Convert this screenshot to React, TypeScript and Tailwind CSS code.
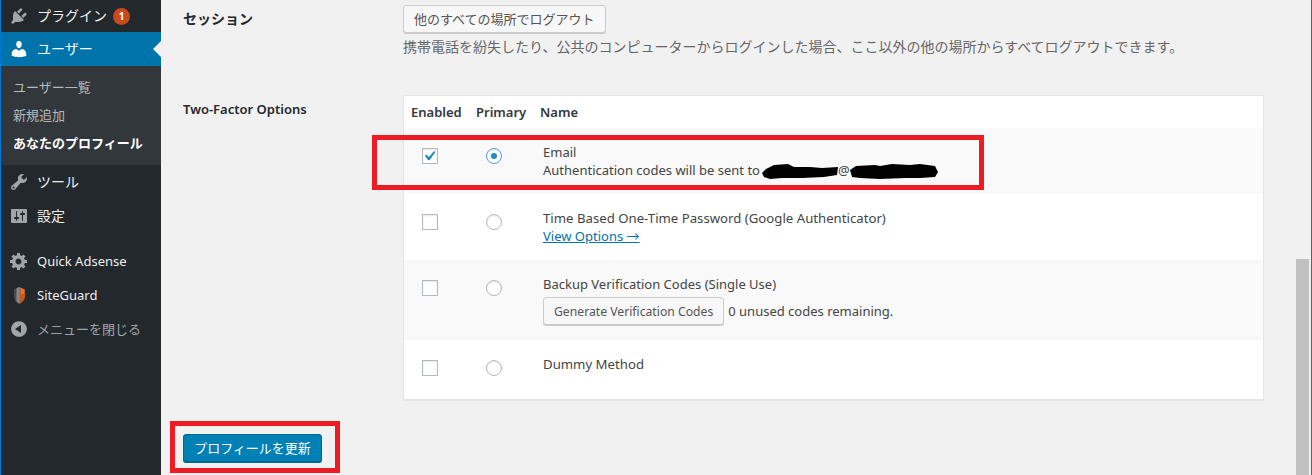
import React from 'react';

const font = { fontFamily: '"Noto Sans", "Noto Sans CJK JP", sans-serif' };

const icons: Record<string, string> = {
  plugin:
    'M13.11 4.36L9.87 7.6 8 5.73l3.24-3.24c.35-.34 1.05-.2 1.56.32.52.51.66 1.21.31 1.55zm-8 1.77l.91-1.12 9.01 9.01-1.19.84c-.71.71-2.63 1.16-3.82 1.16H6.14L4.9 17.26c-.59.59-1.54.59-2.12 0-.59-.58-.59-1.53 0-2.12l1.24-1.24v-3.88c0-1.13.4-3.19 1.09-3.89zm7.26 3.97l3.24-3.24c.34-.35 1.04-.21 1.55.31.52.51.66 1.21.31 1.55l-3.24 3.25z',
  user:
    'M10 9.25c-2.27 0-2.73-3.44-2.73-3.44C7 4.02 7.82 2 9.97 2c2.16 0 2.98 2.02 2.71 3.81 0 0-.41 3.44-2.68 3.44zm0 2.57L12.72 10c2.39 0 4.52 2.33 4.52 4.53v2.49s-3.65 1.13-7.24 1.13c-3.65 0-7.24-1.13-7.24-1.13v-2.49c0-2.25 1.94-4.48 4.47-4.48z',
  tools:
    'M16.68 9.77c-1.34 1.34-3.3 1.67-4.95.99l-5.41 6.52c-.99.99-2.59.99-3.58 0s-.99-2.59 0-3.57l6.52-5.42c-.68-1.65-.35-3.61.99-4.95 1.28-1.28 3.12-1.62 4.72-1.06l-2.89 2.89 2.82 2.82 2.86-2.87c.53 1.58.18 3.39-1.08 4.65zM3.81 16.21c.4.39 1.04.39 1.43 0 .4-.4.4-1.04 0-1.43-.39-.4-1.03-.4-1.43 0-.39.39-.39 1.03 0 1.43z',
  settings:
    'M18 16V4c0-.55-.45-1-1-1H3c-.55 0-1 .45-1 1v12c0 .55.45 1 1 1h14c.55 0 1-.45 1-1zM8 11h1c.55 0 1 .45 1 1s-.45 1-1 1H8v1.5c0 .28-.22.5-.5.5s-.5-.22-.5-.5V13H6c-.55 0-1-.45-1-1s.45-1 1-1h1V5.5c0-.28.22-.5.5-.5s.5.22.5.5V11zm5-2h-1c-.55 0-1-.45-1-1s.45-1 1-1h1V5.5c0-.28.22-.5.5-.5s.5.22.5.5V7h1c.55 0 1 .45 1 1s-.45 1-1 1h-1v5.5c0 .28-.22.5-.5.5s-.5-.22-.5-.5V9z',
  gear:
    'M18 12h-2.18c-.17.7-.44 1.35-.81 1.93l1.54 1.54-2.1 2.1-1.54-1.54c-.58.36-1.23.63-1.91.79V19H8v-2.18c-.68-.16-1.33-.43-1.91-.79l-1.54 1.54-2.12-2.12 1.54-1.54c-.36-.58-.63-1.23-.79-1.91H1V9.03h2.17c.16-.7.44-1.35.8-1.94L2.43 5.55l2.1-2.1 1.54 1.54c.58-.37 1.24-.64 1.93-.81V2h3v2.18c.68.16 1.33.43 1.91.79l1.54-1.54 2.12 2.12-1.54 1.54c.36.59.64 1.24.8 1.94H18V12zm-8.5 1.5c1.66 0 3-1.34 3-3s-1.34-3-3-3-3 1.34-3 3 1.34 3 3 3z',
  collapse:
    'M10 2.16c4.33 0 7.84 3.51 7.84 7.84s-3.51 7.84-7.84 7.84S2.16 14.33 2.16 10 5.67 2.16 10 2.16zM12 14V6l-6 4z',
};

const MenuIcon = ({ name, className }: { name: string; className: string }) => (
  <svg viewBox="0 0 20 20" className={`h-5 w-5 shrink-0 ${className}`} fill="currentColor" fillRule="evenodd">
    <path d={icons[name]} />
  </svg>
);

const ShieldIcon = () => (
  <svg viewBox="0 0 20 20" className="h-5 w-5 shrink-0">
    <path d="M10 2 L5 4.5 V11 C5 15 7 17.5 10 19z" fill="#4a4d50" />
    <path d="M10 2 L16 4.5 V11 C16 15 13 17.5 10 19z" fill="#c9591a" />
    <path d="M12 3 L15 4.5 V9 H12z" fill="#b9853f" />
    <path d="M7.5 3.2 L10.5 2 V18.5 L7.5 16.5z" fill="#85878a" />
  </svg>
);

const MenuItem = ({ children, icon }: { children: React.ReactNode; icon: React.ReactNode }) => (
  <div className="flex h-[34px] items-center gap-2 pl-2 text-[14px] text-[#eeeeee]">
    {icon}
    {children}
  </div>
);

const Checkbox = ({ checked }: { checked?: boolean }) => (
  <span className="flex h-4 w-4 items-center justify-center border border-[#b4b9be] bg-white shadow-[inset_0_1px_2px_rgba(0,0,0,0.1)]">
    {checked && (
      <svg viewBox="3.8 2.9 14 14" className="h-[14px] w-[14px] shrink-0 text-[#1e8cbe]" fill="currentColor">
        <path d="M14.83 4.89l1.34.94-5.81 8.38H9.02L5.78 9.67l1.34-1.25 2.57 2.4z" />
      </svg>
    )}
  </span>
);

const Radio = ({ checked }: { checked?: boolean }) => (
  <span
    className={`flex h-4 w-4 items-center justify-center rounded-full border bg-white shadow-[inset_0_1px_2px_rgba(0,0,0,0.1)] ${
      checked ? 'border-[#5b9dd9]' : 'border-[#b4b9be]'
    }`}
  >
    {checked && <span className="h-[6px] w-[6px] rounded-full bg-[#1e8cbe]" />}
  </span>
);

// redacted part of the address, drawn over in the screenshot
const Scribble = ({ width, d, className }: { width: number; d: string; className?: string }) => (
  <svg viewBox={`0 0 ${width} 15`} width={width} height={15} className={`inline-block align-[-4px] ${className ?? ''}`}>
    <path d={d} fill="#000" />
  </svg>
);

const MethodRow = ({
  children,
  checked,
  shaded,
  height,
}: {
  children: React.ReactNode;
  checked?: boolean;
  shaded?: boolean;
  height: string;
}) => (
  <div className={`grid grid-cols-[65px_64px_1fr] ${height} ${shaded ? 'bg-[#f9f9f9]' : 'bg-white'}`}>
    <div className="pl-[18px] pt-5">
      <Checkbox checked={checked} />
    </div>
    <div className="pl-[17px] pt-5">
      <Radio checked={checked} />
    </div>
    <div className="pl-[10px] pt-[15px] text-[#444444]">{children}</div>
  </div>
);

export default function App() {
  return (
    <div
      className="relative flex h-[475px] w-[1312px] overflow-hidden border-x border-[#0078d7] bg-[#f1f1f1] text-[13px] leading-[18px]"
      style={font}
    >
      {/* Admin menu */}
      <aside className="w-40 shrink-0 bg-[#23282d]">
        <div className="flex h-8 items-center gap-2 pl-2 text-[14px] text-[#eeeeee]">
          <MenuIcon name="plugin" className="text-[#a0a5aa]" />
          プラグイン
          <span className="ml-[-2px] flex h-[17px] w-[17px] items-center justify-center rounded-full bg-[#ca4a1f] text-[10px] font-bold text-white">
            1
          </span>
        </div>
        <div className="relative flex h-[34px] items-center gap-2 bg-[#0073aa] pl-2 text-[14px] text-white">
          <MenuIcon name="user" className="text-white" />
          ユーザー
          <span className="absolute right-0 top-[9px] border-y-8 border-r-8 border-y-transparent border-r-[#f1f1f1]" />
        </div>
        <div className="flex h-[99px] flex-col gap-[10px] bg-[#32373c] pl-3 pt-[12px] text-[13px] text-[#b4b9be]">
          <div>ユーザー一覧</div>
          <div>新規追加</div>
          <div className="font-bold text-white">あなたのプロフィール</div>
        </div>
        <MenuItem icon={<MenuIcon name="tools" className="text-[#a0a5aa]" />}>ツール</MenuItem>
        <MenuItem icon={<MenuIcon name="settings" className="text-[#a0a5aa]" />}>設定</MenuItem>
        <div className="mt-[11px]">
          <MenuItem icon={<MenuIcon name="gear" className="text-[#a0a5aa]" />}>
            <span className="text-[13px]">Quick Adsense</span>
          </MenuItem>
          <MenuItem icon={<ShieldIcon />}>
            <span className="text-[13px]">SiteGuard</span>
          </MenuItem>
          <div className="flex h-[34px] items-center gap-2 pl-2 text-[13px] text-[#a0a5aa]">
            <MenuIcon name="collapse" className="text-[#a0a5aa]" />
            メニューを閉じる
          </div>
        </div>
      </aside>

      {/* Profile form */}
      <main className="min-w-0 flex-1 pl-[22px] pr-8 pt-[5px]">
        <div className="flex h-[90px]">
          <div className="w-[220px] pt-[5px] text-[14px] font-semibold text-[#23282d]">セッション</div>
          <div>
            <button className="h-7 rounded-[3px] border border-[#cccccc] bg-[#f7f7f7] px-[10px] text-[#555555] shadow-[0_1px_0_#cccccc]">
              他のすべての場所でログアウト
            </button>
            <p className="mt-[5px] whitespace-nowrap text-[14px] text-[#666666]">
              携帯電話を紛失したり、公共のコンピューターからログインした場合、ここ以外の他の場所からすべてログアウトできます。
            </p>
          </div>
        </div>
        <div className="flex">
          <div className="w-[220px] pt-[5px] font-semibold text-[#23282d]">Two-Factor Options</div>
          <div className="h-[305px] flex-1 border border-[#e5e5e5] bg-white shadow-[0_1px_1px_rgba(0,0,0,0.04)]">
            <div className="grid h-8 grid-cols-[65px_64px_1fr] items-center font-semibold text-[#32373c]">
              <div className="pl-[7px]">Enabled</div>
              <div className="pl-[7px]">Primary</div>
              <div className="pl-[7px]">Name</div>
            </div>
            <MethodRow checked shaded height="h-[66px]">
              <div>Email</div>
              <div className="whitespace-nowrap">
                Authentication codes will be sent to
                <Scribble
                  width={76}
                  className="ml-[2px]"
                  d="M0 9 L4 5 L12 1 L26 0 L32 3 L48 3 L60 4 L76 3 L75 11 L62 13 L40 14 L20 14 L8 15 L2 13z"
                />
                @
                <Scribble
                  width={88}
                  d="M0 6 L6 2 L25 1 L30 2 L42 0 L60 1 L70 0 L85 2 L88 8 L85 13 L70 14 L55 14 L30 15 L10 14 L2 13z"
                />
              </div>
            </MethodRow>
            <MethodRow height="h-[66px]">
              <div className="text-[13.2px]">Time Based One-Time Password (Google Authenticator)</div>
              <a className="text-[#0073aa] underline">View Options →</a>
            </MethodRow>
            <MethodRow shaded height="h-20">
              <div>Backup Verification Codes (Single Use)</div>
              <div className="mt-1 flex items-center gap-1">
                <button className="h-7 rounded-[3px] border border-[#cccccc] bg-[#f7f7f7] px-[10px] pt-[1px] text-[12.2px] text-[#555555] shadow-[0_1px_0_#cccccc]">
                  Generate Verification Codes
                </button>
                0 unused codes remaining.
              </div>
            </MethodRow>
            <MethodRow height="h-[59px]">
              <div className="text-[13.2px]">Dummy Method</div>
            </MethodRow>
          </div>
        </div>
        <button className="mt-[34px] h-7 w-[139px] rounded-[3px] border border-[#006799] bg-[#0081b5] text-white shadow-[0_1px_0_#006799]">
          プロフィールを更新
        </button>
      </main>

      {/* Scrollbar */}
      <div className="flex w-[15px] shrink-0 flex-col pt-[259px] pr-[2px]">
        <div className="flex-1 bg-[#c1c1c1]" />
      </div>

      {/* Red annotation boxes */}
      <div className="absolute left-[371px] top-[135px] h-[55px] w-[612px] border-[5px] border-[#ed1c24]" />
      <div className="absolute left-[169px] top-[421px] h-[52px] w-[170px] border-[5px] border-[#ed1c24]" />
    </div>
  );
}
